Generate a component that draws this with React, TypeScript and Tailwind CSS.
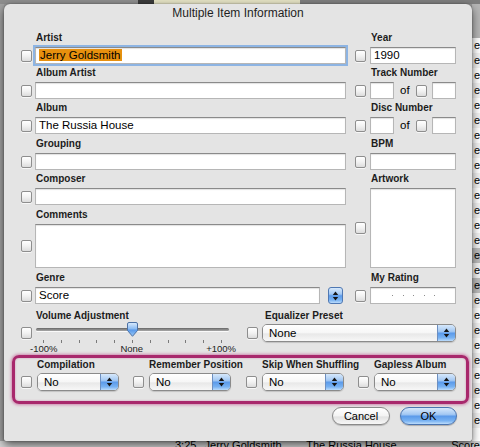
import React from "react";

const aqua =
  "bg-[linear-gradient(to_bottom,#d6e8fb,#a3c8f3_40%,#5c9bea_52%,#78b2f2_80%,#bcdcfc)]";

function Check({ className = "" }: { className?: string }) {
  return (
    <div
      className={`w-[11px] h-[12px] shrink-0 rounded-[2px] border border-[#8e8e8e] bg-[linear-gradient(to_bottom,#ffffff,#f2f2f2_50%,#dcdcdc)] shadow-[0_1px_0_rgba(255,255,255,0.7)] ${className}`}
    />
  );
}

function Label({ children, className = "" }: { children: React.ReactNode; className?: string }) {
  return (
    <div className={`h-[12px] text-[10px] leading-[12px] font-bold text-[#1c1c1c] whitespace-nowrap ${className}`}>
      {children}
    </div>
  );
}

function Box({ children, className = "" }: { children?: React.ReactNode; className?: string }) {
  return (
    <div
      className={`bg-white border border-[#b6b6b6] border-t-[#8a8a8a] shadow-[inset_0_1px_1px_rgba(0,0,0,0.12)] text-[11.5px] leading-[15px] text-black pl-[3px] whitespace-nowrap overflow-hidden ${className}`}
    >
      {children}
    </div>
  );
}

function Arrows() {
  return (
    <svg width="7" height="10" viewBox="0 0 7 10">
      <path d="M3.5 0.6 L6.2 3.9 H0.8 Z" fill="#151515" />
      <path d="M0.8 6.1 H6.2 L3.5 9.4 Z" fill="#151515" />
    </svg>
  );
}

function Popup({ value, className = "" }: { value: string; className?: string }) {
  return (
    <div
      className={`flex h-[18px] rounded-[5px] border border-[#8a8a8a] overflow-hidden shadow-[0_1px_1px_rgba(0,0,0,0.15)] ${className}`}
    >
      <div className="flex-1 bg-[linear-gradient(to_bottom,#ffffff,#f6f6f6_50%,#e8e8e8_55%,#f7f7f7)] pl-[6px] text-[11.5px] leading-[16px] text-black">
        {value}
      </div>
      <div className={`w-[18px] flex items-center justify-center border-l border-[#6d8fc0] ${aqua}`}>
        <Arrows />
      </div>
    </div>
  );
}

function Cell({
  label,
  pad,
  gap,
  className = "",
  children,
}: {
  label: string;
  pad: string;
  gap: string;
  className?: string;
  children: React.ReactNode;
}) {
  return (
    <div className={`flex flex-col ${className}`}>
      <Label className={pad}>{label}</Label>
      <div className={`mt-[3px] flex items-center ${gap}`}>{children}</div>
    </div>
  );
}

function Thumb() {
  return (
    <svg width="13" height="15" viewBox="0 0 13 15" className="absolute left-[90px] top-0">
      <defs>
        <linearGradient id="th" x1="0" y1="0" x2="0" y2="1">
          <stop offset="0" stopColor="#dcecfd" />
          <stop offset="0.45" stopColor="#8dbdf3" />
          <stop offset="0.55" stopColor="#5a9aea" />
          <stop offset="1" stopColor="#9ccbf7" />
        </linearGradient>
      </defs>
      <path
        d="M1.5 2 Q1.5 0.5 3 0.5 H10 Q11.5 0.5 11.5 2 V8.5 L6.5 14.3 L1.5 8.5 Z"
        fill="url(#th)"
        stroke="#4d72a6"
        strokeWidth="1"
      />
    </svg>
  );
}

const options = ["Compilation", "Remember Position", "Skip When Shuffling", "Gapless Album"];
const optGap = ["", "ml-[14px]", "ml-[15px]", "ml-[14px]"];

export default function App() {
  const listRows = Array.from({ length: 26 });
  const ticks = Array.from({ length: 11 });

  return (
    <div className="relative w-[480px] h-[447px] overflow-hidden bg-[#9a9a9a] font-['Liberation_Sans',Arial,sans-serif]">
      {/* iTunes window behind the sheet */}
      <div className="flex h-[4px]">
        <div className="w-[138px] bg-[#8d8d8d]" />
        <div className="w-[16px] bg-[#3b3b3b]" />
        <div className="w-[146px] bg-[#e3e1c3]" />
        <div className="flex-1 bg-[#7e7e7e]" />
      </div>
      <div className="flex h-[437px]">
        <div className="w-[4px] bg-[#a2a2a2]" />
        <div className="w-[468px]" />
        <div className="w-[8px] flex flex-col bg-white overflow-hidden">
          <div className="h-[34px] shrink-0 bg-[#b5b5b5]" />
          {listRows.map((_, i) => (
            <div
              key={i}
              className={`h-[15px] shrink-0 pl-[2px] text-[11px] leading-[15px] text-black ${
                i === 14 || i === 16 ? "bg-[#bcbcbc]" : i % 2 ? "bg-[#f2f2f2]" : "bg-white"
              }`}
            >
              e
            </div>
          ))}
        </div>
      </div>
      <div className="h-[6px] bg-[#d4d4d4] overflow-hidden">
        <div className="-mt-[2px] flex pl-[175px] text-[11px] leading-[12px] text-black whitespace-nowrap">
          <span className="w-[30px]">3:25</span>
          <span className="w-[103px]">Jerry Goldsmith</span>
          <span className="w-[147px]">The Russia House</span>
          <span>Score</span>
        </div>
      </div>

      {/* Multiple Item Information sheet */}
      <div className="absolute left-[4px] top-[4px] w-[468px] h-[437px] rounded-t-[6px] rounded-b-[2px] bg-[#e4e4e4] shadow-[0_4px_10px_rgba(0,0,0,0.6),0_0_2px_rgba(0,0,0,0.4)] flex flex-col">
        <div className="h-[18px] pt-[2px] text-center text-[12px] leading-[14px] text-[#1e1e1e]">
          Multiple Item Information
        </div>

        <div className="flex flex-col pl-[17px] pr-[16px] pt-[10px]">
          <div className="flex gap-[9px]">
            <Cell label="Artist" pad="pl-[15px]" gap="gap-[3px]" className="w-[325px]">
              <Check />
              <Box className="flex-1 h-[17px] pl-[2px] border-[#7d9dc9] ring-2 ring-[#8db4e3]">
                <span className="bg-[#e8900e] px-[1px]">Jerry Goldsmith</span>
              </Box>
            </Cell>
            <Cell label="Year" pad="pl-[16px]" gap="gap-[4px]" className="w-[101px]">
              <Check />
              <Box className="flex-1 h-[17px]">1990</Box>
            </Cell>
          </div>

          <div className="mt-[3px] flex gap-[9px]">
            <Cell label="Album Artist" pad="pl-[15px]" gap="gap-[3px]" className="w-[325px]">
              <Check />
              <Box className="flex-1 h-[17px]" />
            </Cell>
            <Cell label="Track Number" pad="pl-[16px]" gap="gap-[0px]" className="w-[101px]">
              <Check />
              <Box className="ml-[4px] w-[24px] h-[17px]" />
              <span className="ml-[6px] text-[11.5px] leading-[15px]">of</span>
              <Check className="ml-[6px]" />
              <Box className="ml-[5px] flex-1 h-[17px]" />
            </Cell>
          </div>

          <div className="mt-[3px] flex gap-[9px]">
            <Cell label="Album" pad="pl-[15px]" gap="gap-[3px]" className="w-[325px]">
              <Check />
              <Box className="flex-1 h-[17px]">The Russia House</Box>
            </Cell>
            <Cell label="Disc Number" pad="pl-[16px]" gap="gap-[0px]" className="w-[101px]">
              <Check />
              <Box className="ml-[4px] w-[24px] h-[17px]" />
              <span className="ml-[6px] text-[11.5px] leading-[15px]">of</span>
              <Check className="ml-[6px]" />
              <Box className="ml-[5px] flex-1 h-[17px]" />
            </Cell>
          </div>

          <div className="mt-[4px] flex gap-[9px]">
            <Cell label="Grouping" pad="pl-[15px]" gap="gap-[3px]" className="w-[325px]">
              <Check />
              <Box className="flex-1 h-[17px]" />
            </Cell>
            <Cell label="BPM" pad="pl-[16px]" gap="gap-[4px]" className="w-[101px]">
              <Check />
              <Box className="flex-1 h-[17px]" />
            </Cell>
          </div>

          <div className="mt-[3px] flex gap-[9px]">
            <div className="w-[325px] flex flex-col">
              <Cell label="Composer" pad="pl-[15px]" gap="gap-[3px]">
                <Check />
                <Box className="flex-1 h-[17px]" />
              </Cell>
              <Cell label="Comments" pad="pl-[15px]" gap="gap-[3px]" className="mt-[4px]">
                <Check />
                <Box className="flex-1 h-[44px]" />
              </Cell>
            </div>
            <Cell label="Artwork" pad="pl-[16px]" gap="gap-[4px]" className="w-[101px]">
              <Check />
              <Box className="flex-1 h-[80px]" />
            </Cell>
          </div>

          <div className="mt-[4px] flex gap-[9px]">
            <Cell label="Genre" pad="pl-[15px]" gap="gap-[3px]" className="w-[325px]">
              <Check />
              <Box className="w-[285px] h-[17px]">Score</Box>
              <div
                className={`ml-[5px] w-[15px] h-[17px] rounded-[3px] border border-[#4f78b3] flex items-center justify-center ${aqua}`}
              >
                <Arrows />
              </div>
            </Cell>
            <Cell label="My Rating" pad="pl-[16px]" gap="gap-[4px]" className="w-[101px]">
              <Check />
              <Box className="flex-1 h-[17px] flex items-center gap-[9.5px] pl-[21px]">
                {[0, 1, 2, 3, 4].map((d) => (
                  <div key={d} className="w-[1px] h-[1px] bg-[#8c8c8c]" />
                ))}
              </Box>
            </Cell>
          </div>

          <div className="mt-[6px] flex">
            <div className="w-[226px] flex flex-col">
              <Label className="pl-[15px]">Volume Adjustment</Label>
              <div className="flex">
                <Check className="mt-[5px]" />
                <div className="ml-[4px] w-[193px] flex flex-col">
                  <div className="relative h-[15px] pt-[6px]">
                    <div className="h-[3px] rounded-full bg-[linear-gradient(to_bottom,#666666,#aaaaaa)] shadow-[0_1px_0_rgba(255,255,255,0.8)]" />
                    <Thumb />
                  </div>
                  <div className="mt-[3px] h-[3px] px-[7px] flex justify-between">
                    {ticks.map((_, i) => (
                      <div key={i} className="w-[1px] h-[3px] bg-[#7a7a7a]" />
                    ))}
                  </div>
                  <div className="mt-[1px] -ml-[6px] -mr-[7px] flex justify-between text-[9.5px] leading-[10px] text-[#222]">
                    <span>-100%</span>
                    <span>None</span>
                    <span>+100%</span>
                  </div>
                </div>
              </div>
            </div>
            <div className="w-[209px] flex flex-col">
              <Label className="pl-[18px]">Equalizer Preset</Label>
              <div className="mt-[2px] flex items-center gap-[4px]">
                <Check />
                <Popup value="None" className="flex-1" />
              </div>
            </div>
          </div>

          <div className="mt-[1px] -ml-[9px] w-[457px] h-[49px] rounded-[7px] border-[3px] border-[#a8286c] shadow-[0_0_3px_1px_rgba(190,60,130,0.55),inset_0_0_2px_rgba(190,60,130,0.5)] pl-[6px] pt-[1px] flex">
            {options.map((o, i) => (
              <div key={o} className={`w-[98px] flex flex-col ${optGap[i]}`}>
                <Label className="pl-[16px]">{o}</Label>
                <div className="mt-[2px] flex items-center gap-[5px]">
                  <Check />
                  <Popup value="No" className={i === 3 ? "w-[83px]" : "w-[82px]"} />
                </div>
              </div>
            ))}
          </div>

          <div className="mt-[3px] -mr-[1px] flex justify-end gap-[10px]">
            <button className="w-[58px] h-[18px] rounded-full border border-[#8a8a8a] bg-[linear-gradient(to_bottom,#ffffff,#f3f3f3_50%,#e2e2e2_55%,#f7f7f7)] text-[11px] leading-[16px] text-black shadow-[0_1px_1px_rgba(0,0,0,0.2)]">
              Cancel
            </button>
            <button
              className={`w-[57px] h-[18px] rounded-full border border-[#4a74b0] text-[11px] leading-[16px] text-black shadow-[0_1px_1px_rgba(0,0,0,0.25)] ${aqua}`}
            >
              OK
            </button>
          </div>
        </div>
      </div>
    </div>
  );
}
